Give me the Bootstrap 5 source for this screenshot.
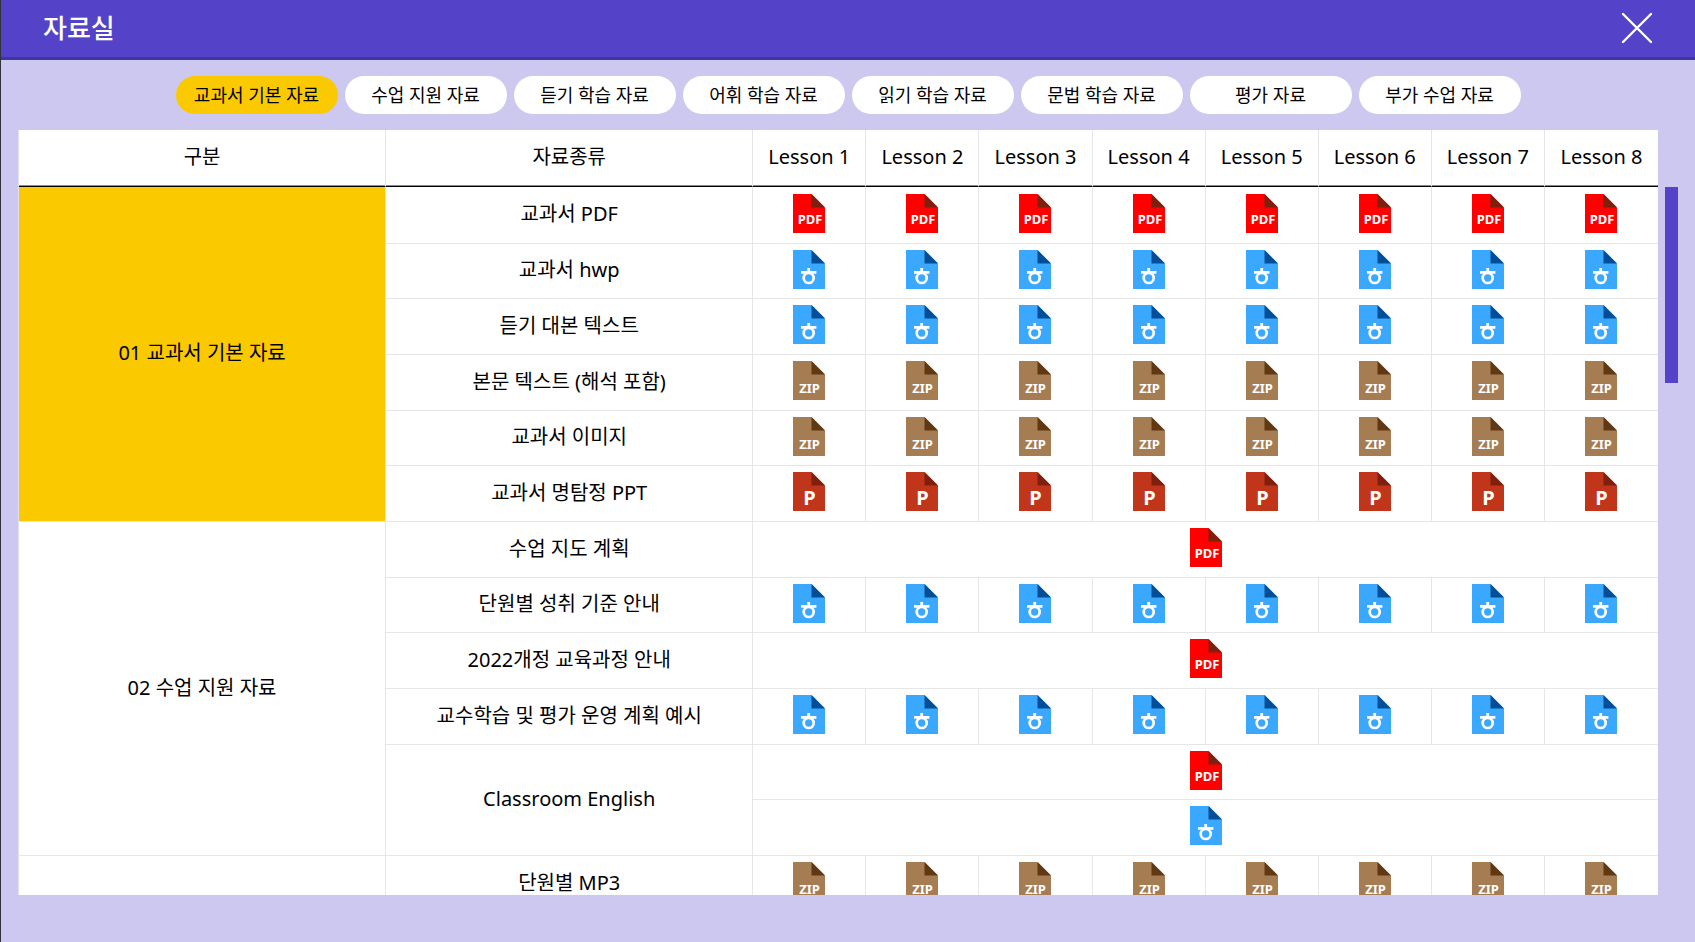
<!DOCTYPE html>
<html lang="ko">
<head>
<meta charset="utf-8">
<meta name="viewport" content="width=device-width, initial-scale=1">
<title>자료실</title>
<link href="https://cdn.jsdelivr.net/npm/bootstrap@5.3.0/dist/css/bootstrap.min.css" rel="stylesheet">
<style>
  body { background: #cdc8f0; border-left: 1px solid #33323c; color: #000; font-family: "Noto Sans", "Noto Sans CJK KR", sans-serif; }
  .room-header { height: 60px; padding: 0 42px 2px; background: #5443c9; border-bottom: 3px solid #4434a2; }
  .room-title { font-size: 26px; font-weight: 500; line-height: 32px; }
  .close-btn { width: 32px; height: 32px; }
  .room-tabs { gap: 7px; padding: 16px 0; }
  .tab-btn { width: 162px; height: 38px; padding: 0; border: 0; border-radius: 19px; background: #fff; color: #000; font-size: 18px; line-height: 26px; }
  .tab-btn.active, .tab-btn:hover { background: #fbc900; color: #000; }
  .room-body { margin: 0 17px 47px; gap: 7px; min-height: 0; }
  .sheet { background: #fff; overflow-y: auto; scrollbar-width: none; border-left: 1px solid #e2dff5; }
  .sheet::-webkit-scrollbar { display: none; }
  .data-table { width: 100%; table-layout: fixed; border-collapse: separate; border-spacing: 0; font-size: 20px; line-height: 28px; text-align: center; }
  .col-wide { width: 22.4%; }
  .data-table th, .data-table td { padding: 0 0 2px; font-weight: 400; border-right: 1px solid #e6e6e6; border-bottom: 1px solid #e6e6e6; vertical-align: middle; }
  .data-table thead th { position: sticky; top: 0; height: 57px; background: #fff; border-bottom: 1px solid #000; box-shadow: inset 0 -1px #8a8a8a; }
  .data-table tr > .edge { border-right: 0; }
  .data-table tbody tr { height: 56px; }
  .data-table tbody tr:first-child { height: 57px; }
  .data-table tbody tr:nth-child(3n+2) { height: 55px; }
  .data-table .current { background: #fbc900; }
  .data-table .file-cell { padding-bottom: 4px; }
  .file-link { display: block; width: 32px; height: 39px; margin: 0 auto; }
  .file-link svg { display: block; }
  .file-link text { font-family: "Noto Sans", sans-serif; font-weight: 700; fill: #fff; text-anchor: middle; }
  .scroll-rail { width: 13px; padding-top: 57px; }
  .scroll-thumb { height: 196px; background: #5443c9; }
</style>
<script src="https://cdn.jsdelivr.net/npm/bootstrap@5.3.0/dist/js/bootstrap.bundle.min.js"></script>
</head>
<body class="vh-100 d-flex flex-column overflow-hidden">
<header class="room-header d-flex align-items-center justify-content-between flex-shrink-0">
  <h1 class="room-title text-white m-0">자료실</h1>
  <button type="button" class="close-btn btn p-0 border-0" aria-label="닫기">
    <svg class="d-block" width="32" height="32" viewBox="0 0 32 32" fill="none" stroke="#fff" stroke-width="2.4" stroke-linecap="round"><path d="M2 2 30 30M30 2 2 30"/></svg>
  </button>
</header>
<nav class="room-tabs d-flex flex-wrap justify-content-center flex-shrink-0">
  <button type="button" class="tab-btn btn active">교과서 기본 자료</button>
  <button type="button" class="tab-btn btn">수업 지원 자료</button>
  <button type="button" class="tab-btn btn">듣기 학습 자료</button>
  <button type="button" class="tab-btn btn">어휘 학습 자료</button>
  <button type="button" class="tab-btn btn">읽기 학습 자료</button>
  <button type="button" class="tab-btn btn">문법 학습 자료</button>
  <button type="button" class="tab-btn btn">평가 자료</button>
  <button type="button" class="tab-btn btn">부가 수업 자료</button>
</nav>
<main class="room-body d-flex flex-grow-1">
  <div class="sheet flex-grow-1">
    <table class="data-table">
      <colgroup><col class="col-wide"><col class="col-wide"><col span="8"></colgroup>
      <thead>
        <tr>
          <th scope="col">구분</th><th scope="col">자료종류</th>
          <th scope="col">Lesson 1</th><th scope="col">Lesson 2</th><th scope="col">Lesson 3</th><th scope="col">Lesson 4</th>
          <th scope="col">Lesson 5</th><th scope="col">Lesson 6</th><th scope="col">Lesson 7</th><th scope="col" class="edge">Lesson 8</th>
        </tr>
      </thead>
      <tbody>
        <tr data-file="pdf"><th scope="rowgroup" rowspan="6" class="current">01 교과서 기본 자료</th><td>교과서 PDF</td></tr>
        <tr data-file="hwp"><td>교과서 hwp</td></tr>
        <tr data-file="hwp"><td>듣기 대본 텍스트</td></tr>
        <tr data-file="zip"><td>본문 텍스트 (해석 포함)</td></tr>
        <tr data-file="zip"><td>교과서 이미지</td></tr>
        <tr data-file="ppt"><td>교과서 명탐정 PPT</td></tr>
        <tr data-file="pdf" data-shared><th scope="rowgroup" rowspan="6">02 수업 지원 자료</th><td>수업 지도 계획</td></tr>
        <tr data-file="hwp"><td>단원별 성취 기준 안내</td></tr>
        <tr data-file="pdf" data-shared><td>2022개정 교육과정 안내</td></tr>
        <tr data-file="hwp"><td>교수학습 및 평가 운영 계획 예시</td></tr>
        <tr data-file="pdf" data-shared><td rowspan="2">Classroom English</td></tr>
        <tr data-file="hwp" data-shared></tr>
        <tr data-file="zip"><td></td><td>단원별 MP3</td></tr>
      </tbody>
    </table>
  </div>
  <div class="scroll-rail flex-shrink-0"><div class="scroll-thumb"></div></div>
</main>
<script>
  // Page colour, folded-corner colour and mark for each file type
  const files = {
    pdf: ['#ff0000', '#7f200f', '<text x="17" y="30" font-size="13">PDF</text>'],
    hwp: ['#3aa8ff', '#004e98', '<path d="M15.7 18v4M8 22.3h15.4" stroke="#fff" stroke-width="2.8" fill="none"/><circle cx="15.7" cy="28" r="5" stroke="#fff" stroke-width="2.7" fill="none"/>'],
    zip: ['#a67c52', '#603813', '<text x="16.5" y="32" font-size="13">ZIP</text>'],
    ppt: ['#c1361a', '#7f200f', '<text x="16.5" y="33" font-size="20">P</text>']
  };
  // A shared file spans all lessons; the others have one file per lesson
  document.querySelectorAll('tr[data-file]').forEach(row => {
    const kind = row.dataset.file, [page, fold, mark] = files[kind];
    const shared = 'shared' in row.dataset, count = shared ? 1 : 8;
    for (let i = 1; i <= count; i++) {
      const cell = row.insertCell();
      cell.className = 'file-cell' + (i === count ? ' edge' : '');
      if (shared) cell.colSpan = 8;
      cell.innerHTML = `<a href="#" class="file-link" aria-label="${kind} ${i}"><svg width="32" height="39" viewBox="0 0 32 39"><path d="M0 0H18.5L32 13.5V39H0Z" fill="${page}"/><path d="M18.5 0 32 13.5H18.5Z" fill="${fold}"/>${mark}</svg></a>`;
    }
  });
</script>
</body>
</html>
